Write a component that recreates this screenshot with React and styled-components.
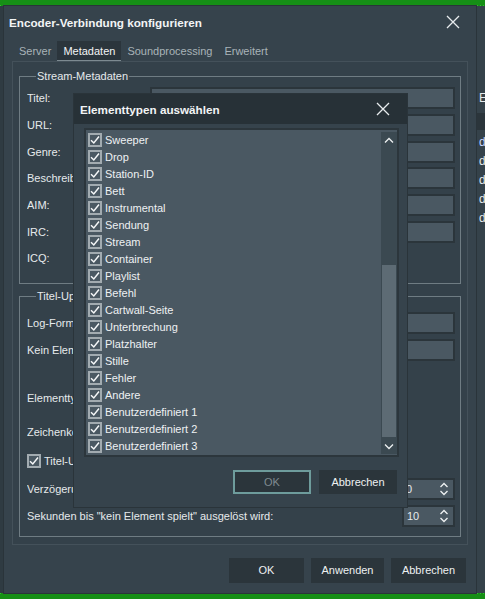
import React from "react";
import styled, { createGlobalStyle } from "styled-components";

const GlobalStyle = createGlobalStyle`
  html, body {
    margin: 0;
    padding: 0;
    background: #2e3a41;
  }
  body {
    font-family: "Liberation Sans", Arial, sans-serif;
    font-size: 11px;
    color: #e6eaec;
  }
`;

const Page = styled.div`
  width: 485px;
  height: 599px;
  display: flex;
  flex-direction: column;
  overflow: hidden;
  background: #2e3a41;
`;

const GreenStrip = styled.div`
  height: ${(p) => p.$h}px;
  flex-shrink: 0;
  background: #168f16;
  background-image: repeating-linear-gradient(
    90deg,
    #2fbf2f 0 1px,
    transparent 1px 3px
  );
  background-size: 100% 1px;
  background-repeat: no-repeat;
  background-position: 0 ${(p) => (p.$top ? p.$h - 1 : 0)}px;
`;

const Middle = styled.div`
  flex: 1;
  display: flex;
  min-height: 0;
`;

const LeftEdge = styled.div`
  width: 4px;
  background: #2f3b42;
  border-right: 1px solid #46535b;
  box-sizing: border-box;
`;

const SideApp = styled.div`
  flex: 1;
  background: #35424a;
  border-left: 1px solid #56636b;
  display: flex;
  flex-direction: column;
  padding-top: 83px;
  overflow: hidden;
  font-size: 12px;
  color: #e6eaec;
`;

const SideBand = styled.div`
  height: 17px;
  margin: 5px 0 3px;
  background: #2b353b;
`;

const SideLine = styled.div`
  height: 19px;
  line-height: 19px;
  padding-left: 2px;
  white-space: nowrap;
  color: ${(p) => (p.$blue ? "#c9d6ff" : "#e6eaec")};
`;

const MainDialog = styled.div`
  position: relative;
  width: 472px;
  background: #36434c;
  display: flex;
  flex-direction: column;
  box-shadow: 0 0 0 1px #2a343a;
`;

const TitleBar = styled.div`
  height: 32px;
  display: flex;
  align-items: center;
  justify-content: space-between;
  padding: 0 16px 0 5px;
  flex-shrink: 0;
`;

const Title = styled.div`
  font-weight: 700;
  font-size: 11.7px;
  color: #f2f4f5;
`;

const CloseIcon = ({ size = 14 }) => (
  <svg width={size} height={size} viewBox="0 0 14 14">
    <path d="M1 1L13 13M13 1L1 13" stroke="#e8ecee" strokeWidth="1.3" fill="none" />
  </svg>
);

const TabBar = styled.div`
  height: 23px;
  display: flex;
  align-items: flex-end;
  padding-left: 9px;
  flex-shrink: 0;
`;

const Tab = styled.div`
  height: 20px;
  line-height: 20px;
  padding: 0 6px;
  font-size: 11px;
  color: ${(p) => (p.$active ? "#f2f4f5" : "#a9b3b8")};
  background: ${(p) => (p.$active ? "#2b353c" : "transparent")};
  border-bottom: 1px solid ${(p) => (p.$active ? "#7d8a91" : "transparent")};
  box-sizing: border-box;
`;

const TabPanel = styled.div`
  margin: 0 8px;
  height: 484px;
  border: 1px solid #44515a;
  background: #34414a;
  box-sizing: border-box;
  padding: 8px 6px 0 6px;
  display: flex;
  flex-direction: column;
  gap: 6px;
`;

const Group = styled.fieldset`
  margin: 0;
  padding: ${(p) => p.$pt}px 7px 0 7px;
  border: 1px solid #6f7c83;
  height: ${(p) => p.$h}px;
  box-sizing: border-box;
  min-width: 0;
`;

const Legend = styled.legend`
  padding: 0 1px;
  margin-left: 9px;
  font-size: 11px;
  color: #e6eaec;
`;

const FormRow = styled.div`
  height: ${(p) => p.$h || 27}px;
  margin-top: ${(p) => p.$mt || 0}px;
  display: flex;
  align-items: center;
`;

const Label = styled.div`
  width: ${(p) => (p.$auto ? "auto" : "125px")};
  flex-shrink: 0;
  font-size: 11px;
  white-space: nowrap;
  overflow: hidden;
`;

const Input = styled.div`
  height: 18px;
  flex: ${(p) => (p.$w ? "none" : 1)};
  width: ${(p) => (p.$w ? `${p.$w}px` : "auto")};
  background: #4a5862;
  box-shadow: 0 0 0 2px #2b353b;
`;

const Spinner = styled.div`
  margin-left: auto;
  width: ${(p) => p.$w}px;
  height: 18px;
  background: #4a5862;
  box-shadow: 0 0 0 2px #2b353b;
  display: flex;
  align-items: center;
  justify-content: space-between;
  padding: 0 4px 0 3px;
  box-sizing: border-box;
  font-size: 11px;
`;

const SpinArrows = () => (
  <svg width="10" height="16" viewBox="0 0 10 16">
    <path d="M1.5 6L5 2.5L8.5 6M1.5 10L5 13.5L8.5 10" stroke="#eef1f2" strokeWidth="1.3" fill="none" />
  </svg>
);

const CheckRow = styled.div`
  height: 27px;
  margin-top: ${(p) => p.$mt || 0}px;
  display: flex;
  align-items: center;
  gap: 3px;
  white-space: nowrap;
  font-size: 11px;
`;

const Box = styled.span`
  width: 14px;
  height: 14px;
  box-sizing: border-box;
  border: 2px solid #a2abb0;
  background: #4a5862;
  display: inline-flex;
  align-items: center;
  justify-content: center;
  flex-shrink: 0;
`;

const Check = () => (
  <Box>
    <svg width="10" height="10" viewBox="0 0 10 10">
      <path d="M1 5.2L3.8 8L9 1.5" stroke="#f4f6f7" strokeWidth="1.5" fill="none" />
    </svg>
  </Box>
);

const Footer = styled.div`
  flex: 1;
  display: flex;
  justify-content: flex-end;
  align-items: center;
  gap: 7px;
  padding: 2px 10px 0 0;
`;

const Button = styled.div`
  width: ${(p) => p.$w || 75}px;
  height: ${(p) => p.$h || 25}px;
  display: flex;
  align-items: center;
  justify-content: center;
  background: #2b353b;
  font-size: 11px;
  color: ${(p) => (p.$disabled ? "#7f8b90" : "#eef1f2")};
  box-sizing: border-box;
  border: ${(p) => (p.$focus ? "2px solid #6e9c9c" : "none")};
`;

/* overlay: Elementtypen auswählen */
const Overlay = styled.div`
  position: absolute;
  left: 70px;
  top: 88px;
  width: 333px;
  height: 413px;
  background: #36434c;
  box-shadow: 0 0 0 1px #2a343a;
  display: flex;
  flex-direction: column;
`;

const OverlayTitle = styled.div`
  height: 30px;
  background: #273137;
  display: flex;
  align-items: center;
  justify-content: space-between;
  padding: 0 17px 0 6px;
  flex-shrink: 0;
`;

const ListBox = styled.div`
  margin: 4px 8px 0 10px;
  height: 329px;
  background: #4a5862;
  border: 2px solid #2c363c;
  box-sizing: border-box;
  display: flex;
  padding: 2px 0 1px 2px;
`;

const Items = styled.div`
  flex: 1;
  display: flex;
  flex-direction: column;
`;

const Item = styled.div`
  height: 17px;
  display: flex;
  align-items: center;
  gap: 3px;
  font-size: 11px;
  color: #eef1f3;
  white-space: nowrap;
`;

const ScrollBar = styled.div`
  width: 16px;
  background: #3b4951;
  display: flex;
  flex-direction: column;
`;

const ScrollArrow = styled.div`
  height: 16px;
  display: flex;
  align-items: center;
  justify-content: center;
  flex-shrink: 0;
`;

const Track = styled.div`
  flex: 1;
  display: flex;
  flex-direction: column;
  padding: 0 1px;
`;

const Thumb = styled.div`
  margin-top: ${(p) => p.$top}px;
  height: ${(p) => p.$h}px;
  background: #5d6b74;
`;

const OverlayButtons = styled.div`
  flex: 1;
  display: flex;
  justify-content: flex-end;
  align-items: center;
  gap: 8px;
  padding-right: 10px;
  padding-bottom: 1px;
`;

const Chevron = ({ up }) => (
  <svg width="10" height="7" viewBox="0 0 10 7">
    <path d={up ? "M1 5.5L5 1.5L9 5.5" : "M1 1.5L5 5.5L9 1.5"} stroke="#eef1f2" strokeWidth="1.3" fill="none" />
  </svg>
);

const types = [
  "Sweeper",
  "Drop",
  "Station-ID",
  "Bett",
  "Instrumental",
  "Sendung",
  "Stream",
  "Container",
  "Playlist",
  "Befehl",
  "Cartwall-Seite",
  "Unterbrechung",
  "Platzhalter",
  "Stille",
  "Fehler",
  "Andere",
  "Benutzerdefiniert 1",
  "Benutzerdefiniert 2",
  "Benutzerdefiniert 3",
];

const metaLabels = ["Titel:", "URL:", "Genre:", "Beschreibung:", "AIM:", "IRC:", "ICQ:"];

export default function App() {
  return (
    <>
      <GlobalStyle />
      <Page>
        <GreenStrip $h={6} $top />
        <Middle>
          <LeftEdge />
          <MainDialog>
            <TitleBar>
              <Title>Encoder-Verbindung konfigurieren</Title>
              <CloseIcon />
            </TitleBar>
            <TabBar>
              <Tab>Server</Tab>
              <Tab $active>Metadaten</Tab>
              <Tab>Soundprocessing</Tab>
              <Tab>Erweitert</Tab>
            </TabBar>
            <TabPanel>
              <Group $h={214} $pt={3}>
                <Legend>Stream-Metadaten</Legend>
                {metaLabels.map((l, i) => (
                  <FormRow key={l} $h={26.7}>
                    <Label>{l}</Label>
                    {i < 6 ? <Input /> : <Input $w={200} />}
                  </FormRow>
                ))}
              </Group>
              <Group $h={247} $pt={7}>
                <Legend>Titel-Update</Legend>
                <FormRow>
                  <Label>Log-Format:</Label>
                  <Input />
                </FormRow>
                <FormRow>
                  <Label>Kein Element spielt:</Label>
                  <Input />
                </FormRow>
                <FormRow $mt={21}>
                  <Label>Elementtypen:</Label>
                  <Input $w={200} />
                </FormRow>
                <FormRow $mt={7}>
                  <Label>Zeichenkodierung:</Label>
                  <Input $w={200} />
                </FormRow>
                <CheckRow $mt={2}>
                  <Check />
                  <span>Titel-Update aktivieren</span>
                </CheckRow>
                <FormRow $mt={1}>
                  <Label>Verzögerung (Sekunden):</Label>
                  <Spinner $w={56}>
                    <span>10</span>
                    <SpinArrows />
                  </Spinner>
                </FormRow>
                <FormRow>
                  <Label $auto>Sekunden bis "kein Element spielt" ausgelöst wird:</Label>
                  <Spinner $w={49}>
                    <span>10</span>
                    <SpinArrows />
                  </Spinner>
                </FormRow>
              </Group>
            </TabPanel>
            <Footer>
              <Button>OK</Button>
              <Button $w={73}>Anwenden</Button>
              <Button>Abbrechen</Button>
            </Footer>

            <Overlay>
              <OverlayTitle>
                <Title>Elementtypen auswählen</Title>
                <CloseIcon />
              </OverlayTitle>
              <ListBox>
                <Items>
                  {types.map((t) => (
                    <Item key={t}>
                      <Check />
                      <span>{t}</span>
                    </Item>
                  ))}
                </Items>
                <ScrollBar>
                  <ScrollArrow>
                    <Chevron up />
                  </ScrollArrow>
                  <Track>
                    <Thumb $top={117} $h={172} />
                  </Track>
                  <ScrollArrow>
                    <Chevron />
                  </ScrollArrow>
                </ScrollBar>
              </ListBox>
              <OverlayButtons>
                <Button $w={78} $h={24} $focus $disabled>
                  OK
                </Button>
                <Button $w={78} $h={24}>
                  Abbrechen
                </Button>
              </OverlayButtons>
            </Overlay>
          </MainDialog>
          <SideApp>
            <SideLine>E</SideLine>
            <SideBand />
            <SideLine $blue>du</SideLine>
            <SideLine>d</SideLine>
            <SideLine>d</SideLine>
            <SideLine>d</SideLine>
            <SideLine>d</SideLine>
          </SideApp>
        </Middle>
        <GreenStrip $h={6} />
      </Page>
    </>
  );
}
